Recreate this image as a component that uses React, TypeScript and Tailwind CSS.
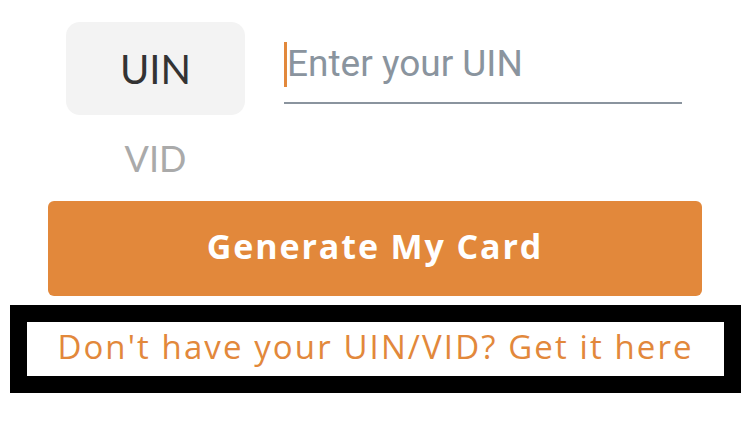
import React from 'react'

export default function App() {
    return (
        <div className="w-[750px] h-[429px] bg-white overflow-hidden">
            <div className="flex pl-[66px] pt-[22px]">
                <div className="flex flex-col items-center w-[179px]">
                    <div className="w-[179px] h-[93px] rounded-[14px] bg-[#f3f3f3] flex items-center justify-center text-[40px] text-[#333] font-['Lato',sans-serif]">
                        UIN
                    </div>
                    <div className="mt-[25px] text-[36px] leading-none text-[#aaa] font-['Lato',sans-serif]">VID</div>
                </div>
                <div className="ml-[39px] w-[398px] h-[82px] border-b-2 border-[#8a949e] flex items-center">
                    <span className="w-[3px] h-[45px] mt-[4px] bg-[#e2883b]" />
                    <span className="mt-[4px] text-[37px] text-[#8a949e] font-['Roboto',sans-serif]">Enter your UIN</span>
                </div>
            </div>
            <div className="pl-[48px] mt-[25px]">
                <button className="w-[654px] h-[95px] pb-[5px] rounded-[6px] bg-[#e2883b] text-white text-[34px] tracking-[1.9px] font-bold font-['Open_Sans',sans-serif] flex items-center justify-center">
                    Generate My Card
                </button>
            </div>
            <div className="ml-[10px] mt-[9px] w-[731px] h-[88px] border-[17px] border-black bg-white flex items-center justify-center">
                <span className="mb-[4px] text-[33px] tracking-[2.1px] text-[#e2883b] font-['Open_Sans',sans-serif]">Don't have your UIN/VID? Get it here</span>
            </div>
        </div>
    )
}
